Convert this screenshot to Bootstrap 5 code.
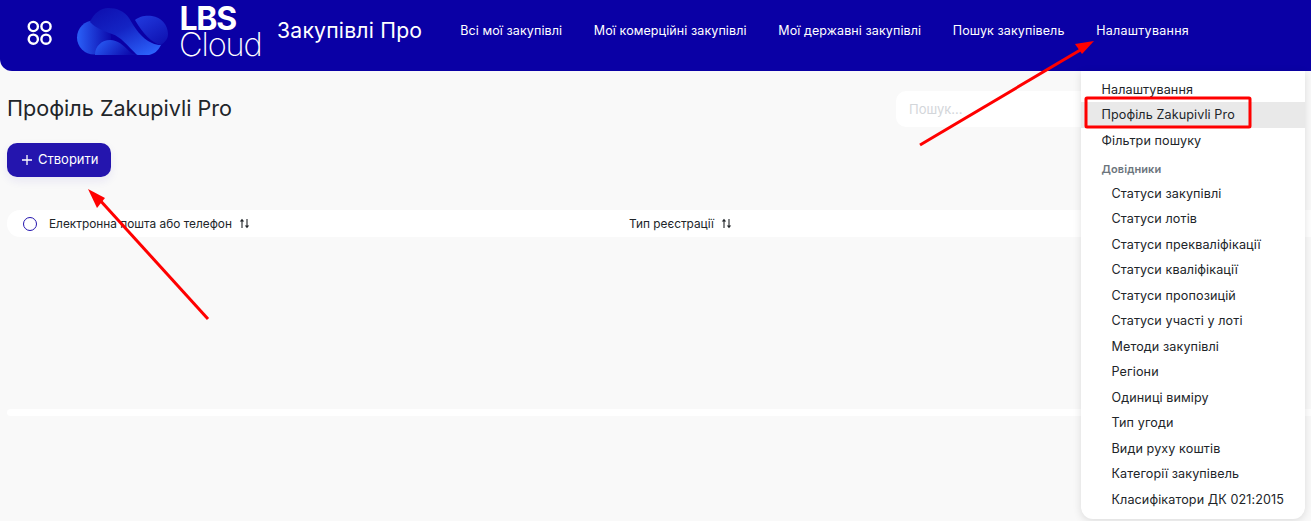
<!DOCTYPE html>
<html lang="uk">
<head>
<meta charset="utf-8">
<title>Профіль Zakupivli Pro</title>
<link rel="stylesheet" href="https://cdn.jsdelivr.net/npm/bootstrap@5.3.0/dist/css/bootstrap.min.css">
<style>
html,body{height:100%;overflow:hidden}
body{background:#f9f9f9;font-family:Inter,"Noto Sans",sans-serif;color:#212529;position:relative}
.top-bar{height:71px;background:#0a00a5;border-radius:0 0 0 12px;padding:0 0 9px 27px}
.apps-icon{width:26px;height:26px;flex:none;margin-top:3px}
.logo-wrap{margin-left:24px;flex:none;width:185px;height:60px;overflow:visible}
.brand-name{color:#fff;font-size:21.2px;margin-left:15px;white-space:nowrap;letter-spacing:.2px}
.top-links{margin-left:38px;gap:31.7px}
.top-links a{color:#fff;text-decoration:none;font-size:12.5px;white-space:nowrap;letter-spacing:.1px}
.top-links a:last-child{letter-spacing:.27px}
.page-head{padding:25px 7px 0;height:72px}
.page-title{font-size:21.6px;font-weight:400;margin:0;line-height:24px;color:#212529}
.search-box{position:absolute;left:896px;top:91px;width:200px;height:36px;background:#fff;border-radius:10px;padding:0 13px;font-size:13px;color:#d3d6da;line-height:36px}
.make-btn{background:#2415ae;border:0;border-radius:10px;color:#fff;font-size:13px;height:34px;width:104px;margin-left:7px;box-shadow:0 4px 10px rgba(42,23,177,.08);padding:0 0 0 14px;gap:5px}
.head-row{margin:33px 0 0 7px;height:27px;background:#fff;border-radius:13px 0 0 13px;font-size:11.85px;color:#212529;padding-top:2px}
.radio-dot{width:14px;height:14px;border:1.5px solid #2415ae;border-radius:50%;margin:-2px 0 0 16px;flex:none}
.col-mail{width:592px;padding-left:12px;flex:none}
.sort-mark{width:11px;height:11px;margin-left:4px;vertical-align:-1px}
.foot-strip{margin:172px 0 0 7px;height:7px;background:#fff;border-radius:4px 0 0 4px}
.settings-menu{position:absolute;left:1081px;top:71px;width:224px;height:448px;background:#fff;border-radius:0 0 12px 12px;box-shadow:0 2px 8px rgba(0,0,0,.12);padding:5.7px 0 0;font-size:12.6px;letter-spacing:.1px;color:#212529}
.menu-line{height:25.5px;line-height:25.5px;padding-left:20.5px;white-space:nowrap}
.menu-line.active-line{background:#e9e9e9}
.menu-sub{padding-left:30.5px}
.menu-head{font-size:11px;font-weight:600;color:#6c757d;padding-left:20.5px;height:25px;line-height:25px;margin-top:4px;margin-bottom:-1.5px}
.marks{position:absolute;left:0;top:0;width:1311px;height:521px;pointer-events:none}
</style>
</head>
<body>
<header class="top-bar d-flex align-items-center">
  <svg class="apps-icon" viewBox="0 0 26 26" fill="none" stroke="#fff" stroke-width="2.4">
    <circle cx="6.3" cy="6.5" r="4.6"/><circle cx="19" cy="6.5" r="4.6"/><circle cx="6.3" cy="19.2" r="4.6"/><circle cx="19" cy="19.2" r="4.6"/>
  </svg>
  <svg class="logo-wrap" viewBox="0 0 185 60">
    <defs>
      <linearGradient id="g1" x1="0" y1="0" x2="1" y2="0"><stop offset="0" stop-color="#2a60f8"/><stop offset="1" stop-color="#0c0aac"/></linearGradient>
      <linearGradient id="g2" x1="0.1" y1="0" x2="0.9" y2="1"><stop offset="0" stop-color="#0e10b0"/><stop offset=".45" stop-color="#1424c4"/><stop offset="1" stop-color="#2d66ff"/></linearGradient>
      <linearGradient id="g3" x1="0" y1="0" x2="1" y2="0.3"><stop offset="0" stop-color="#2a62fa"/><stop offset="1" stop-color="#0c0aac"/></linearGradient>
      <linearGradient id="g4" x1="0.2" y1="0" x2="0.9" y2="1"><stop offset="0" stop-color="#2038dc"/><stop offset="1" stop-color="#0e10b0"/></linearGradient>
    </defs>
    <circle cx="17" cy="36.5" r="17" fill="url(#g1)"/>
    <path d="M58 19C62 15 70 14 75 15C84 16 91 24 91 33C91 38 88 41 84 44C75 42 66 33 58 19Z" fill="url(#g4)"/>
    <path d="M13 21C17 12 24 7 31 7C40 7 47 10 52 17C58 27 64 37 75 42C78 43.5 81 44 84 44C81 50 77 53 72 54L60 54C50 44 44 36 35 33C27 30 20 28 13 21Z" fill="url(#g2)"/>
    <path d="M18 54C18 45 25 39 33 39C41 39 46 44 52 50C55 53 58 54 62 54Z" fill="url(#g3)"/>
    <text x="102.500" y="29" fill="#fff" font-family="Inter,sans-serif" font-weight="700" font-size="32" letter-spacing="-1.3">LBS</text>
    <text x="102" y="55" fill="#fff" font-family="Inter,sans-serif" font-weight="200" font-size="32.500" letter-spacing="-1.100">Cloud</text>
  </svg>
  <span class="brand-name">Закупівлі Про</span>
  <nav class="top-links d-flex">
    <a href="#">Всі мої закупівлі</a>
    <a href="#">Мої комерційні закупівлі</a>
    <a href="#">Мої державні закупівлі</a>
    <a href="#">Пошук закупівель</a>
    <a href="#">Налаштування</a>
  </nav>
</header>
<main>
  <div class="page-head"><h1 class="page-title">Профіль Zakupivli Pro</h1></div>
  <button class="make-btn btn d-flex align-items-center" type="button">
    <svg width="12" height="12" viewBox="0 0 12 12" stroke="#fff" stroke-width="1.3"><path d="M6 1v10M1 6h10"/></svg>
    <span>Створити</span>
  </button>
  <div class="head-row d-flex align-items-center">
    <span class="radio-dot"></span>
    <div class="col-mail">Електронна пошта або телефон <svg class="sort-mark" viewBox="0 0 11 11"><path d="M3 3v7M8 1v7" stroke="#212529" stroke-width="1.1"/><path d="M0.8 3.6L3 .8L5.2 3.6ZM5.8 7.4L8 10.2L10.2 7.4Z" fill="#212529"/></svg></div>
    <div>Тип реєстрації <svg class="sort-mark" viewBox="0 0 11 11"><path d="M3 3v7M8 1v7" stroke="#212529" stroke-width="1.1"/><path d="M0.8 3.6L3 .8L5.2 3.6ZM5.8 7.4L8 10.2L10.2 7.4Z" fill="#212529"/></svg></div>
  </div>
  <div class="foot-strip"></div>
</main>
<div class="search-box">Пошук...</div>
<div class="settings-menu">
  <div class="menu-line">Налаштування</div>
  <div class="menu-line active-line">Профіль Zakupivli Pro</div>
  <div class="menu-line">Фільтри пошуку</div>
  <div class="menu-head">Довідники</div>
  <div class="menu-line menu-sub">Статуси закупівлі</div>
  <div class="menu-line menu-sub">Статуси лотів</div>
  <div class="menu-line menu-sub">Статуси прекваліфікації</div>
  <div class="menu-line menu-sub">Статуси кваліфікації</div>
  <div class="menu-line menu-sub">Статуси пропозицій</div>
  <div class="menu-line menu-sub">Статуси участі у лоті</div>
  <div class="menu-line menu-sub">Методи закупівлі</div>
  <div class="menu-line menu-sub">Регіони</div>
  <div class="menu-line menu-sub">Одиниці виміру</div>
  <div class="menu-line menu-sub">Тип угоди</div>
  <div class="menu-line menu-sub">Види руху коштів</div>
  <div class="menu-line menu-sub">Категорії закупівель</div>
  <div class="menu-line menu-sub">Класифікатори ДК 021:2015</div>
</div>
<svg class="marks" viewBox="0 0 1311 521" fill="none">
  <rect x="1086" y="98" width="164" height="29" rx="1" stroke="#f00" stroke-width="3"/>
  <path d="M920 145L1082 49" stroke="#f00" stroke-width="3"/>
  <path d="M1094 41L1082 54L1075 44Z" fill="#f00"/>
  <path d="M208 319L98 198" stroke="#f00" stroke-width="3"/>
  <path d="M88 189L105 198L97 208Z" fill="#f00"/>
</svg>
</body>
</html>
